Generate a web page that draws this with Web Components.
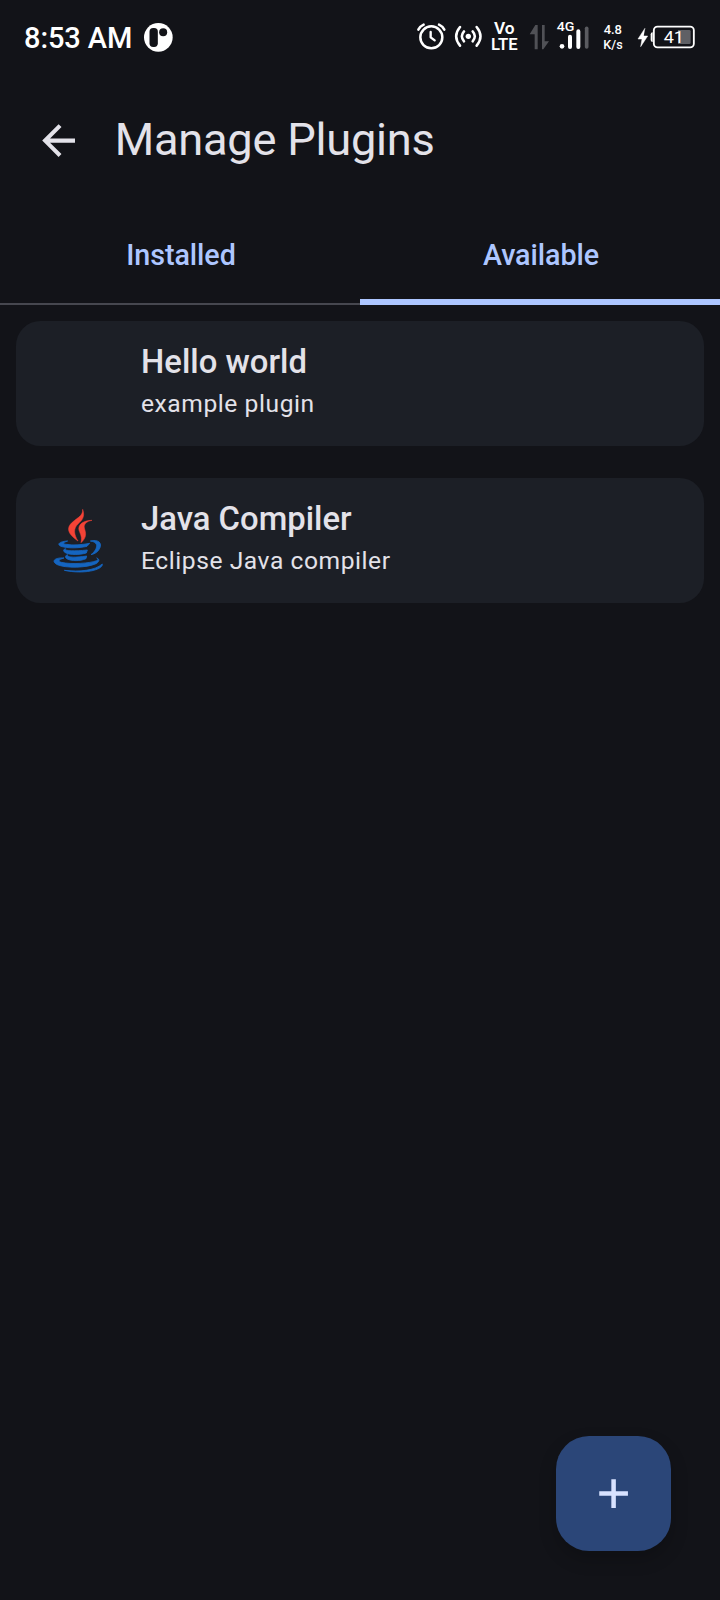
<!DOCTYPE html>
<html lang="en">
<head>
<meta charset="utf-8">
<title>Manage Plugins</title>
<style>
html, body { margin: 0; height: 100%; background: #121318; }
body { font-family: Roboto, "Noto Sans", sans-serif; color: #e3e2e9; }
</style>
</head>
<body>
<plugin-screen></plugin-screen>
<script>
const define = (name, html) => {
  const template = document.createElement('template');
  template.innerHTML = html;
  customElements.define(name, class extends HTMLElement {
    constructor() {
      super();
      this.attachShadow({ mode: 'open' }).appendChild(template.content.cloneNode(true));
    }
  });
};

define('status-bar', `
<style>
:host { display: flex; height: 66px; padding-top: 10px; box-sizing: border-box; color: #fff; }
.time { font: 500 29px/56px Roboto, sans-serif; letter-spacing: -.100px; margin-left: 24px; width: 119px; white-space: nowrap; }
svg { display: block; height: 56px; flex: none; fill: none; stroke-linecap: round; stroke-linejoin: round; }
text { fill: #fff; stroke: none; font-family: Roboto, sans-serif; font-weight: 500; }
.right { display: flex; margin-left: auto; padding-right: 24px; }
</style>
<span class="time">8:53 AM</span>
<svg width="32" viewBox="429 30 96 168"><circle cx="475" cy="112" r="43" fill="#fff"/><rect x="448.500" y="84" width="25" height="57" rx="11" fill="#121318"/><circle cx="489.500" cy="96.500" r="12" fill="#121318"/></svg>
<div class="right">
<svg width="33" viewBox="45 0 99 168" stroke="#fff"><circle cx="94" cy="82" r="33" stroke-width="7.500"/><path d="M92 66V82L104 91" stroke-width="7"/><path d="M55 59Q60 49 71 44M117 44Q128 49 133 59" stroke-width="7.500"/></svg>
<svg width="30" viewBox="159 0 90 168" stroke="#fff" stroke-width="7.500" style="margin-left:5px"><circle cx="205" cy="79" r="8" fill="#fff" stroke="none"/><path d="M192 64Q179 79 192 94M218 64Q231 79 218 94M180 51Q157 79 180 107M230 51Q253 79 230 107"/></svg>
<svg width="29" viewBox="270 0 87 168" style="margin-left:7px"><text style="font-weight:600"><tspan x="282" y="73" font-size="47" textLength="62" lengthAdjust="spacingAndGlyphs">Vo</tspan><tspan x="273" y="119" font-size="50" textLength="80" lengthAdjust="spacingAndGlyphs">LTE</tspan></text></svg>
<svg width="23" viewBox="384 0 69 168" style="margin-left:9px"><path d="M406 45H413V118H404V73H389ZM426 45H434V94H447L430 118H426Z" fill="#505156"/></svg>
<svg width="35" viewBox="15 0 105 168" style="margin-left:4px" stroke="#fff"><text x="20" y="64" font-size="40" textLength="53" lengthAdjust="spacingAndGlyphs">4G</text><circle cx="36" cy="109" r="7" fill="#fff" stroke="none"/><path d="M60 80V111M85 64V111" stroke-width="12"/><path d="M110 55V111" stroke="#5a5b60" stroke-width="11"/></svg>
<svg width="22" viewBox="156 0 66 168" style="margin-left:12px"><text x="161" y="72" font-size="38" textLength="55" lengthAdjust="spacingAndGlyphs">4.8</text><text x="160" y="117" font-size="38" textLength="58" lengthAdjust="spacingAndGlyphs">K/s</text></svg>
<svg width="59" viewBox="261 0 177 168" style="margin-left:13px"><path d="M284 56L264 87H276L272 110L293 78H281Z" fill="#fff" stroke="#fff" stroke-width="1.500"/><path d="M308 67Q302 67 302 73V90Q302 96 308 96Z" fill="#fff"/><rect x="311.500" y="50" width="120" height="62" rx="11" stroke="#fff" stroke-width="5.500"/><path d="M384 60H418Q422 60 422 64V98Q422 102 418 102H384Z" fill="#5f6065"/><text x="341" y="99" font-size="48" textLength="61" lengthAdjust="spacingAndGlyphs" style="font-weight:400">41</text></svg>
</div>`);

define('app-bar', `
<style>
:host { display: flex; align-items: center; height: 131px; padding: 8px 0 0 34px; box-sizing: border-box; }
svg { width: 49.200px; height: 49.200px; display: block; margin-top: 10px; }
h1 { margin: 8px 0 0 31.500px; font-weight: 400; font-size: 45.200px; letter-spacing: -.230px; line-height: 58px; white-space: nowrap; }
</style>
<svg viewBox="0 0 24 24" fill="#e3e2e9"><path d="M20 11H7.830l5.590-5.590L12 4l-8 8 8 8 1.410-1.410L7.830 13H20v-2z"/></svg>
<h1><slot></slot></h1>`);

define('tab-item', `
<style>
:host { display: flex; flex: 1; height: 108px; box-sizing: border-box; align-items: center; justify-content: center; padding: 10px 0 0 2px; border-bottom: 2px solid #46474f; font-size: 28.700px; font-weight: 500; letter-spacing: -.050px; color: #adc6ff; }
:host([selected]) { border-bottom: 6px solid #adc6ff; padding-top: 14px; }
</style><slot></slot>`);

define('tab-strip', `<style>:host { display: flex; }</style><slot></slot>`);

define('java-icon', `
<style>:host { display: block; } svg { display: block; width: 80px; height: 90px; }</style>
<svg viewBox="0 0 240 270">
<g fill="#f44336" stroke="#f44336" stroke-width="1.500"><path d="M128 43C136 66 126 76 114 87C99 101 102 119 114 138C92 123 77 106 91 88C106 70 130 65 128 43Z"/><path d="M156 76C139 79 131 88 133 99C138 115 141 127 123 143C127 127 121 117 117 106C113 89 130 76 156 76Z"/></g>
<g fill="#1565c0" stroke="#1565c0" stroke-width="2.500" stroke-linejoin="round"><path d="M83 138C70 142 66 147 79 148C99 152 128 149 149 145L141 154C114 160 82 160 63 154C48 147 61 139 83 138Z"/>
<path d="M77 161C70 167 96 170 142 165L139 174C117 180 92 180 78 174C68 169 69 163 77 161Z"/>
<path d="M83 179C78 187 103 189 140 183L138 191C121 199 94 198 82 192C73 187 76 181 83 179Z"/>
<path d="M151 138C174 132 189 144 178 162C173 172 163 177 153 179C164 171 173 157 169 148C166 141 160 140 151 138Z"/>
<path d="M72 189C58 193 51 198 64 202C93 209 151 205 170 197C176 193 174 191 170 189C181 193 177 201 168 206C140 219 77 220 52 209C30 197 48 187 72 189Z"/>
<path d="M187 207C190 224 133 239 73 226C119 231 164 227 187 207Z"/></g>
</svg>`);

define('plugin-card', `
<style>
:host { display: flex; height: 125px; box-sizing: border-box; padding-left: 24px; border-radius: 24.600px; background: #1c1f26; }
.icon { width: 80px; margin: 17px 21px 0 0; }
.name { font-size: 32.800px; font-weight: 500; letter-spacing: .020px; line-height: 48px; margin-top: 17px; white-space: nowrap; }
.desc { font-size: 24.600px; letter-spacing: .560px; line-height: 32px; margin-top: 2px; white-space: nowrap; }
</style>
<div class="icon"><slot name="icon"></slot></div>
<div><div class="name"><slot name="name"></slot></div><div class="desc"><slot></slot></div></div>`);

define('add-button', `
<style>
:host { display: grid; place-items: center; width: 115px; height: 115px; border-radius: 33px; background: #2b4678; box-shadow: 0 8px 18px rgba(0,0,0,.2); }
svg { width: 49.200px; height: 49.200px; }
</style>
<svg viewBox="0 0 24 24" fill="#d8e2ff"><path d="M19 13.100h-5.900V19h-2.200v-5.900H5v-2.200h5.900V5h2.200v5.900H19z"/></svg>`);

define('plugin-screen', `
<style>
:host { display: flex; flex-direction: column; height: 1600px; background: #121318; overflow: hidden; }
main { display: flex; flex-direction: column; gap: 32px; padding: 16px 16px 0; flex: 1; }
add-button { align-self: flex-end; margin: 0 49px 49px 0; }
</style>
<status-bar></status-bar>
<app-bar>Manage Plugins</app-bar>
<tab-strip><tab-item>Installed</tab-item><tab-item selected>Available</tab-item></tab-strip>
<main>
<plugin-card><span slot="name">Hello world</span>example plugin</plugin-card>
<plugin-card><java-icon slot="icon"></java-icon><span slot="name">Java Compiler</span>Eclipse Java compiler</plugin-card>
</main>
<add-button role="button" aria-label="Add plugin"></add-button>`);
</script>
</body>
</html>
